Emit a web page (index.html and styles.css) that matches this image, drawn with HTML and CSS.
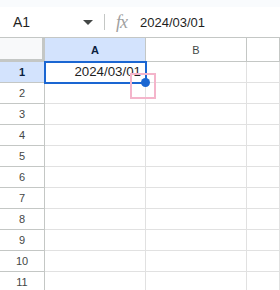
FILE: index.html
```html
<!DOCTYPE html>
<html lang="ja">
<head>
    <meta charset="UTF-8">
    <meta name="viewport" content="width=device-width, initial-scale=1.0">
    <title>Sheet</title>
    <link rel="stylesheet" href="styles.css">
</head>
<body>
    <div class="top-strip"></div>
    <div class="formula-bar">
        <div class="name-box">
            <span class="cell-ref">A1</span>
            <svg class="caret" width="10" height="5" viewBox="0 0 10 5"><path d="M0 0h10L5 5z" fill="#444746"/></svg>
        </div>
        <div class="divider"></div>
        <span class="fx">fx</span>
        <span class="formula-value">2024/03/01</span>
    </div>

    <div class="sheet">
        <div class="row header-row">
            <div class="corner"></div>
            <div class="col-head active">A</div>
            <div class="col-head">B</div>
            <div class="col-head"></div>
        </div>
        <div class="row">
            <div class="row-head active">1</div>
            <div class="cell selected">2024/03/01
                <span class="fill-handle"></span>
                <span class="marker"></span>
            </div>
            <div class="cell"></div>
            <div class="cell"></div>
        </div>
        <div class="row"><div class="row-head">2</div><div class="cell"></div><div class="cell"></div><div class="cell"></div></div>
        <div class="row"><div class="row-head">3</div><div class="cell"></div><div class="cell"></div><div class="cell"></div></div>
        <div class="row"><div class="row-head">4</div><div class="cell"></div><div class="cell"></div><div class="cell"></div></div>
        <div class="row"><div class="row-head">5</div><div class="cell"></div><div class="cell"></div><div class="cell"></div></div>
        <div class="row"><div class="row-head">6</div><div class="cell"></div><div class="cell"></div><div class="cell"></div></div>
        <div class="row"><div class="row-head">7</div><div class="cell"></div><div class="cell"></div><div class="cell"></div></div>
        <div class="row"><div class="row-head">8</div><div class="cell"></div><div class="cell"></div><div class="cell"></div></div>
        <div class="row"><div class="row-head">9</div><div class="cell"></div><div class="cell"></div><div class="cell"></div></div>
        <div class="row"><div class="row-head">10</div><div class="cell"></div><div class="cell"></div><div class="cell"></div></div>
        <div class="row"><div class="row-head">11</div><div class="cell"></div><div class="cell"></div><div class="cell"></div></div>
    </div>
</body>
</html>
```

FILE: styles.css
```css
body {
    margin: 0;
    font-family: 'Liberation Sans', Arial, sans-serif;
    color: #1f1f1f;
    background-color: #ffffff;
    overflow: hidden;
}
.top-strip {
    height: 7px;
    background-color: #f9fbfd;
}
.formula-bar {
    display: flex;
    align-items: center;
    height: 30px;
    border-bottom: 1px solid #c4c7c5;
    background-color: #ffffff;
}
.name-box {
    display: flex;
    align-items: center;
    justify-content: space-between;
    width: 80px;
    padding: 0 11px 0 13px;
}
.cell-ref {
    font-size: 14px;
    color: #1f1f1f;
}
.caret {
    margin-top: 1px;
}
.divider {
    width: 1px;
    height: 16px;
    background-color: #c4c7c5;
}
.fx {
    margin-left: 11px;
    font-family: 'Liberation Serif', serif;
    font-style: italic;
    font-size: 18px;
    color: #a0a0a0;
    letter-spacing: -1px;
}
.formula-value {
    margin-left: 13px;
    font-size: 13px;
    color: #1f1f1f;
}
.row {
    display: grid;
    grid-template-columns: 45px 101px 101px 1fr;
    height: 21px;
}
.header-row {
    height: 24px;
}
.row > div {
    box-sizing: border-box;
    border-right: 1px solid #e1e1e1;
    border-bottom: 1px solid #e1e1e1;
}
.corner {
    background-color: #f8f9fa;
    border-right: 3px solid #c4c7c5 !important;
    border-bottom: 3px solid #c4c7c5 !important;
}
.col-head {
    display: flex;
    align-items: center;
    justify-content: center;
    font-size: 11px;
    color: #444746;
    border-right-color: #c4c7c5 !important;
    border-bottom-color: #c4c7c5 !important;
}
.row-head {
    display: flex;
    align-items: center;
    justify-content: center;
    font-size: 11px;
    color: #444746;
    border-right-color: #c4c7c5 !important;
    border-bottom-color: #c4c7c5 !important;
}
.col-head.active,
.row-head.active {
    background-color: #d3e3fd;
    color: #0b1f3f;
    font-weight: bold;
}
.cell {
    position: relative;
    font-size: 13.3px;
    line-height: 20px;
    text-align: right;
    padding-right: 4px;
    white-space: nowrap;
}
.cell.selected {
    outline: 2px solid #1a66d2;
    outline-offset: -1px;
    z-index: 1;
}
.fill-handle {
    position: absolute;
    right: -5px;
    bottom: -5px;
    width: 9px;
    height: 9px;
    border-radius: 50%;
    background-color: #1a66d2;
    z-index: 2;
}
.marker {
    position: absolute;
    right: -11px;
    bottom: -17px;
    width: 22px;
    height: 22px;
    border: 2px solid #f4b5cb;
    z-index: 2;
}
```
